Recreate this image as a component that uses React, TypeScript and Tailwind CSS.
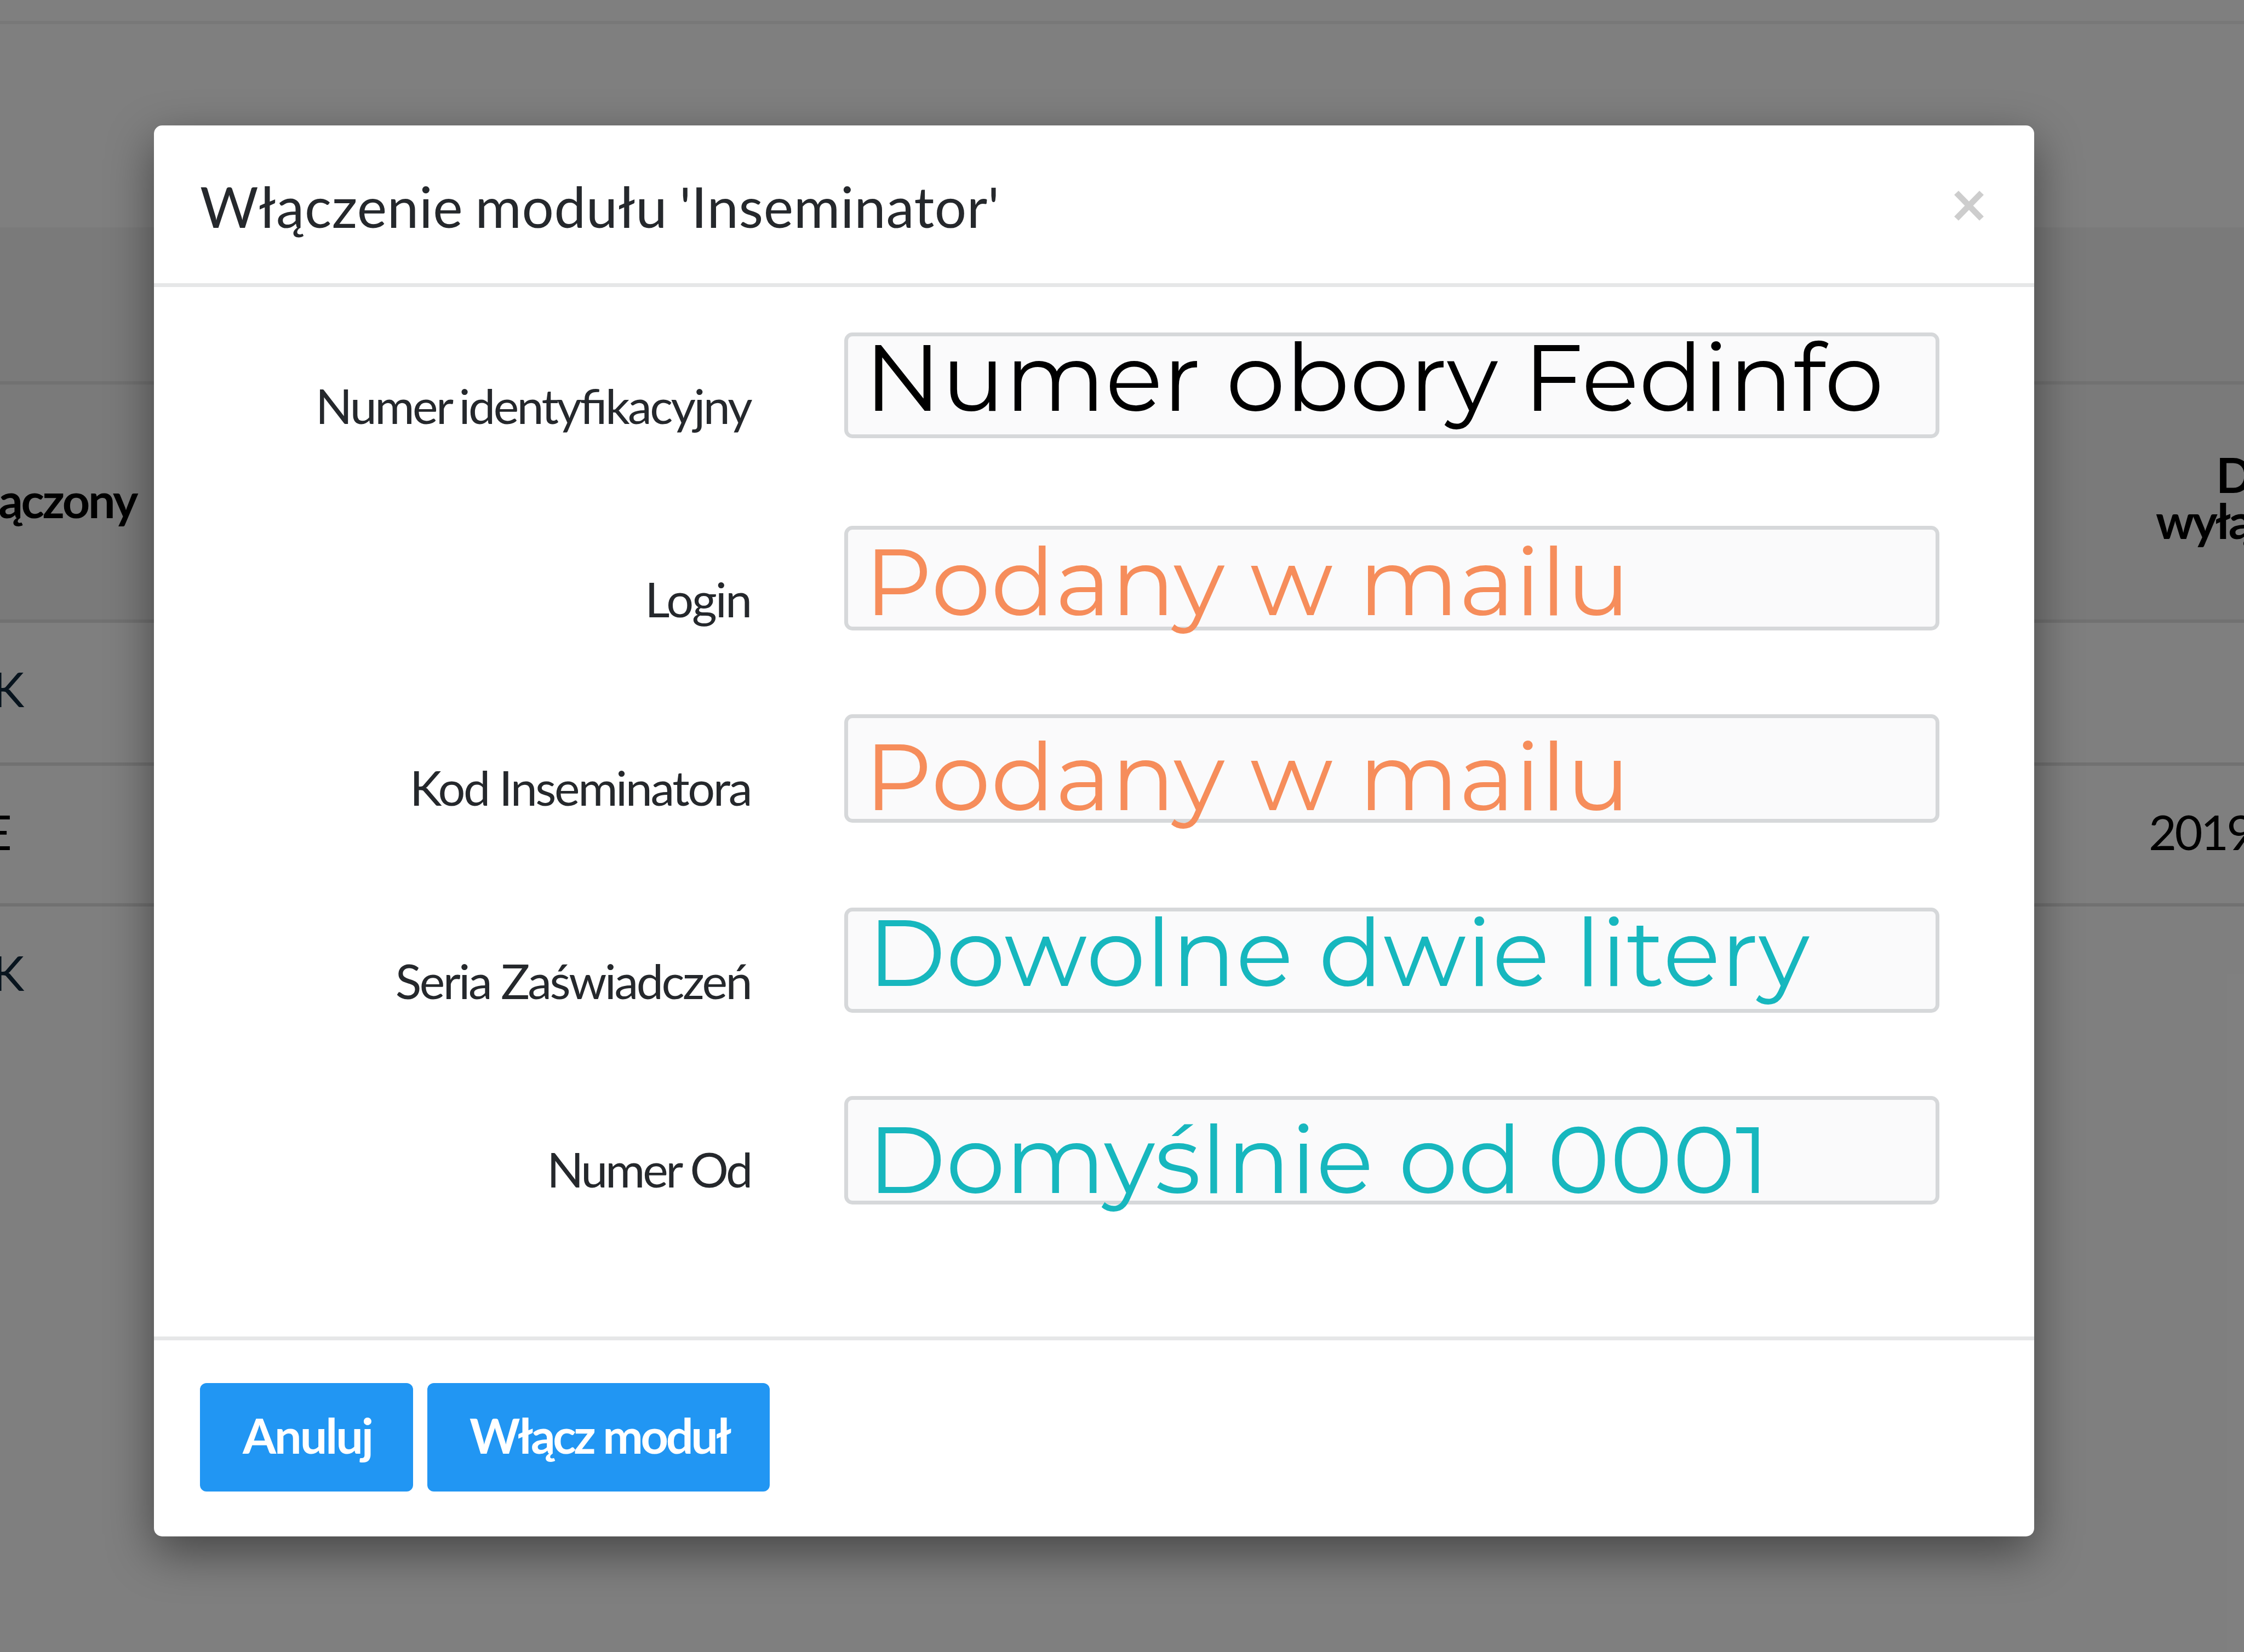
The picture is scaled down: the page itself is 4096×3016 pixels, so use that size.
import React from 'react';
import clsx from 'clsx';

interface Field {
  id: string;
  label: string;
  value: string;
  rowClass: string;
  labelClass: string;
  valueClass: string;
}

const fields: Field[] = [
  {
    id: 'number',
    label: 'Numer identyfikacyjny',
    value: 'Numer obory Fedinfo',
    rowClass: 'mt-[83px] h-[193px]',
    labelClass: "tracking-[-3.6px] [word-spacing:-4px] [font-feature-settings:'liga'_1]",
    valueClass: 'mt-[-11px] ml-[30px] tracking-[0.7px] text-black',
  },
  {
    id: 'login',
    label: 'Login',
    value: 'Podany w mailu',
    rowClass: 'mt-[160px] h-[191px]',
    labelClass: 'tracking-[-3px]',
    valueClass: 'mt-[9px] ml-[30px] tracking-[0.8px] text-[#f68d5b]',
  },
  {
    id: 'code',
    label: 'Kod Inseminatora',
    value: 'Podany w mailu',
    rowClass: 'mt-[153px] h-[198px]',
    labelClass: 'tracking-[-3.4px]',
    valueClass: 'mt-[21px] ml-[30px] tracking-[0.8px] text-[#f68d5b]',
  },
  {
    id: 'series',
    label: 'Seria Zaświadczeń',
    value: 'Dowolne dwie litery',
    rowClass: 'mt-[155px] h-[192px]',
    labelClass: 'tracking-[-3.5px]',
    valueClass: 'mt-[-11px] ml-[36px] tracking-[1px] text-[#17b7be]',
  },
  {
    id: 'from',
    label: 'Numer Od',
    value: 'Domyślnie od 0001',
    rowClass: 'mt-[152px] h-[198px]',
    labelClass: 'tracking-[-4.3px]',
    valueClass: 'mt-[23px] ml-[36px] tracking-[0.6px] text-[#17b7be]',
  },
];

// Table that stays visible behind the dimmed backdrop
const BackgroundTable = () => (
  <div className="flex h-[3016px] w-[4096px] flex-col overflow-hidden bg-white text-[88px] leading-[84px] text-black">
    <div className="h-[44px] border-b-[6px] border-[#f0f0f0]" />
    <div className="h-[371px]" />
    <div className="h-[287px] border-b-[6px] border-[#e2e2e2] bg-[#f5f5f5]" />
    <div className="flex h-[435px] justify-between border-b-[6px] border-[#e2e2e2] bg-[#f5f5f5] font-bold tracking-[-4.4px]">
      <div className="flex w-[249px] justify-end pt-[168px] tracking-[-3.4px]">łączony</div>
      <div className="flex w-[161px] flex-col whitespace-nowrap pt-[122px]">
        <span className="pl-[110px]">D</span>
        <span>wyłą</span>
      </div>
    </div>
    <div className="h-[261px] border-b-[6px] border-[#e2e2e2] pt-[78px] text-[#10293c]">
      <div className="ml-[-14px]">K</div>
    </div>
    <div className="flex h-[257px] justify-between border-b-[6px] border-[#e2e2e2] pt-[78px]">
      <div className="ml-[-29px]">E</div>
      <div className="w-[174px] tracking-[-3.6px]">2019</div>
    </div>
    <div className="pt-[78px] text-[#10293c]">
      <div className="ml-[-14px]">K</div>
    </div>
  </div>
);

const FormRow = ({ field }: { field: Field }) => (
  <div className={clsx('flex', field.rowClass)}>
    <label
      htmlFor={field.id}
      className={clsx('w-[1089px] pt-[89px] text-right text-[88px] leading-[88px] whitespace-nowrap text-[#25282c]', field.labelClass)}
    >
      {field.label}
    </label>
    <div
      id={field.id}
      className="ml-[171px] flex h-full w-[1999px] items-start rounded-[15px] border-[7px] border-[#d6d8da] bg-[#fafafb]"
    >
      <span
        className={clsx("font-[Montserrat,Inter,sans-serif] text-[172px] leading-[172px] whitespace-nowrap", field.valueClass)}
      >
        {field.value}
      </span>
    </div>
  </div>
);

const App = () => {
  return (
    <div className="relative h-[3016px] w-[4096px] overflow-hidden font-[Lato,sans-serif]">
      <BackgroundTable />

      <div className="absolute inset-0 bg-black/50 pt-[229px] pl-[281px]">
        <div className="flex h-[2576px] w-[3432px] flex-col rounded-[15px] bg-white shadow-[0_29px_86px_rgba(0,0,0,0.45)]">
          <div className="flex h-[295px] items-start justify-between border-b-[7px] border-[#e6e7e8] pr-[91px] pl-[84px]">
            <h4 className="pt-[96px] text-[103px] leading-[103px] tracking-[0.6px] [word-spacing:-5px] whitespace-nowrap text-[#25282c]">
              Włączenie modułu 'Inseminator'
            </h4>
            <button type="button" aria-label="Zamknij" className="pt-[118px]">
              <svg width="56" height="57" viewBox="0 0 56 57" fill="none" stroke="#cdcdcd" strokeWidth="11">
                <path d="M5 5 51 52M51 5 5 52" />
              </svg>
            </button>
          </div>

          <div className="h-[1923px] border-b-[7px] border-[#e6e7e8]">
            {fields.map((field) => (
              <FormRow key={field.id} field={field} />
            ))}
          </div>

          <div className="flex gap-[26px] pt-[78px] pl-[84px] text-[88px] leading-[88px] font-bold whitespace-nowrap text-white">
            <button type="button" className="flex h-[198px] w-[389px] items-start rounded-[12px] bg-[#2196f3] pt-[51px] pl-[78px] tracking-[-3px]">
              Anuluj
            </button>
            <button type="button" className="flex h-[198px] w-[625px] items-start rounded-[12px] bg-[#2196f3] pt-[51px] pl-[77px] tracking-[-4.4px]">
              Włącz moduł
            </button>
          </div>
        </div>
      </div>
    </div>
  );
};

export default App;
